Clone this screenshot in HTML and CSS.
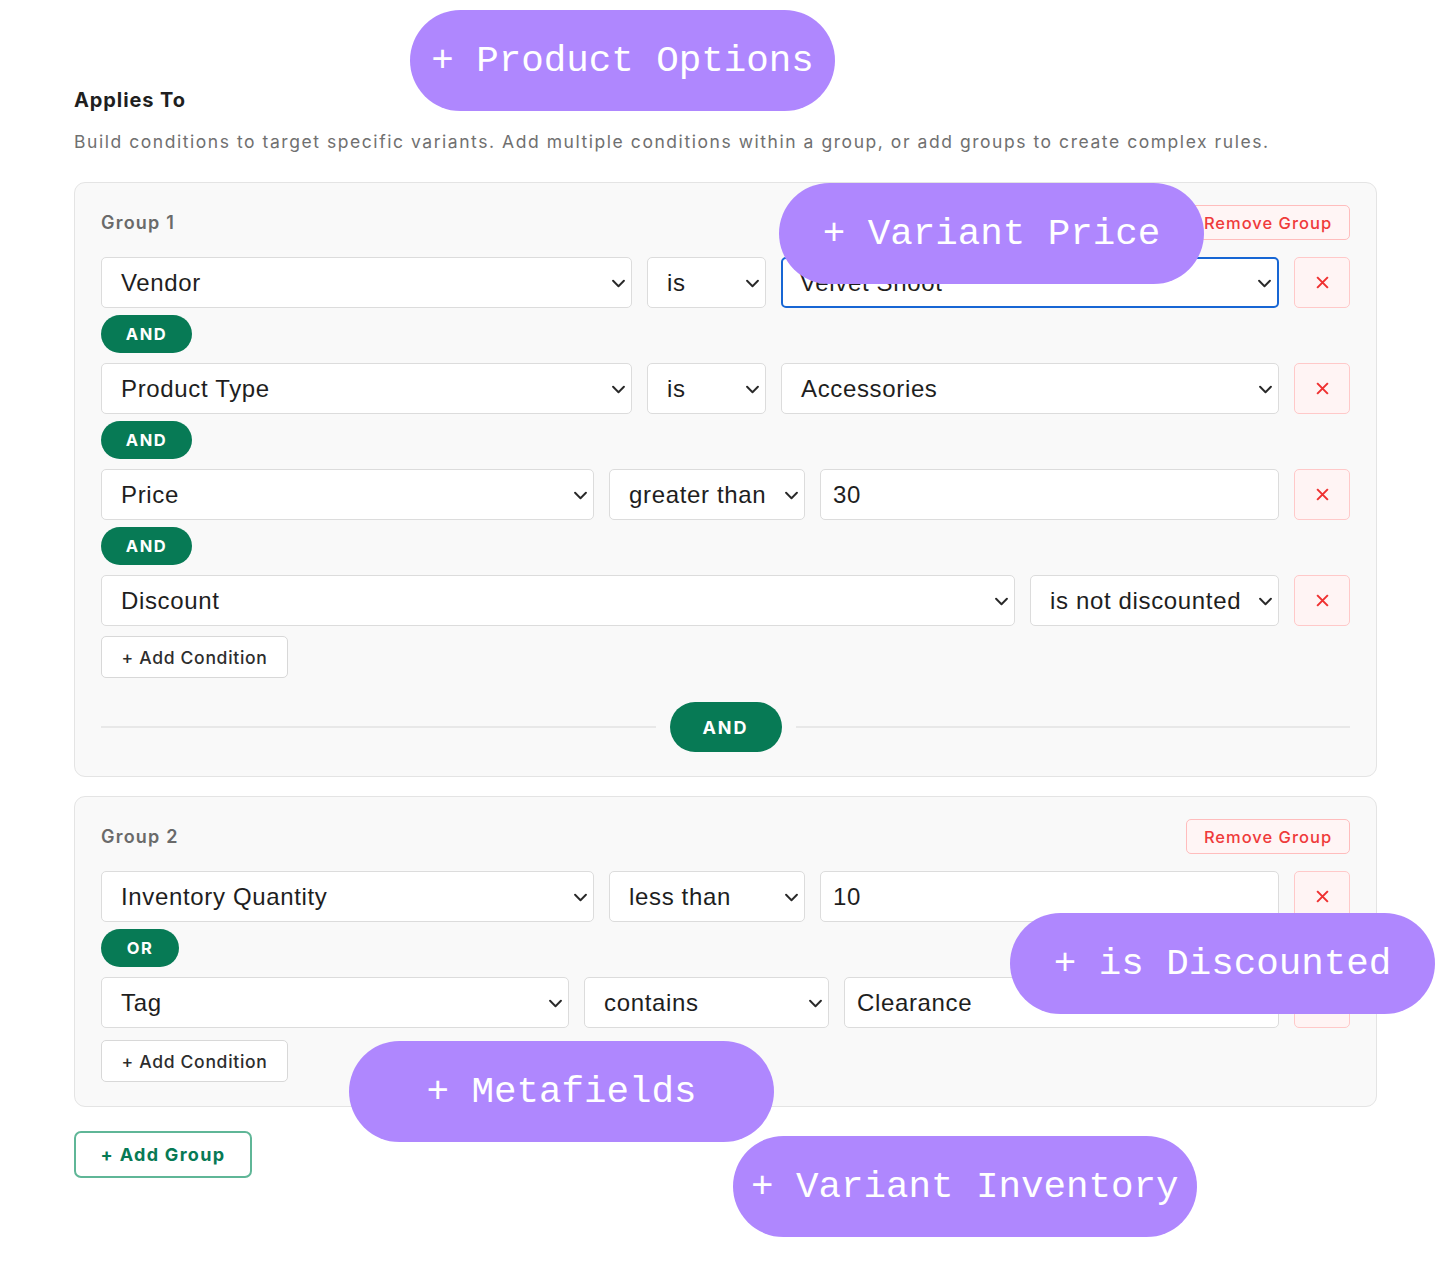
FILE: index.html
```html
<!DOCTYPE html>
<html lang="en">
<head>
<meta charset="utf-8">
<title>Applies To</title>
<link rel="stylesheet" href="styles.css">
</head>
<body>
<div class="page">
  <h2 class="title">Applies To</h2>
  <p class="desc">Build conditions to target specific variants. Add multiple conditions within a group, or add groups to create complex rules.</p>

  <div class="group g1">
    <div class="group-head">
      <span class="group-label">Group 1</span>
      <button class="remove-group">Remove Group</button>
    </div>

    <div class="row">
      <div class="sel w-vendor">Vendor<svg class="chev" viewBox="0 0 12 8"><path d="M1 1.5l5 5 5-5"/></svg></div>
      <div class="sel w-is">is<svg class="chev" viewBox="0 0 12 8"><path d="M1 1.5l5 5 5-5"/></svg></div>
      <div class="sel grow focus">Velvet Shoot<svg class="chev" viewBox="0 0 12 8"><path d="M1 1.5l5 5 5-5"/></svg></div>
      <button class="del"><svg viewBox="0 0 14 14"><path d="M2 2l10 10M12 2L2 12"/></svg></button>
    </div>
    <div class="conn"><span class="logic w-and">AND</span></div>

    <div class="row">
      <div class="sel w-vendor">Product Type<svg class="chev" viewBox="0 0 12 8"><path d="M1 1.5l5 5 5-5"/></svg></div>
      <div class="sel w-is">is<svg class="chev" viewBox="0 0 12 8"><path d="M1 1.5l5 5 5-5"/></svg></div>
      <div class="sel grow">Accessories<svg class="chev" viewBox="0 0 12 8"><path d="M1 1.5l5 5 5-5"/></svg></div>
      <button class="del"><svg viewBox="0 0 14 14"><path d="M2 2l10 10M12 2L2 12"/></svg></button>
    </div>
    <div class="conn"><span class="logic w-and">AND</span></div>

    <div class="row">
      <div class="sel w-price">Price<svg class="chev" viewBox="0 0 12 8"><path d="M1 1.5l5 5 5-5"/></svg></div>
      <div class="sel w-op">greater than<svg class="chev" viewBox="0 0 12 8"><path d="M1 1.5l5 5 5-5"/></svg></div>
      <div class="inp grow">30</div>
      <button class="del"><svg viewBox="0 0 14 14"><path d="M2 2l10 10M12 2L2 12"/></svg></button>
    </div>
    <div class="conn"><span class="logic w-and">AND</span></div>

    <div class="row">
      <div class="sel grow">Discount<svg class="chev" viewBox="0 0 12 8"><path d="M1 1.5l5 5 5-5"/></svg></div>
      <div class="sel w-disc">is not discounted<svg class="chev" viewBox="0 0 12 8"><path d="M1 1.5l5 5 5-5"/></svg></div>
      <button class="del"><svg viewBox="0 0 14 14"><path d="M2 2l10 10M12 2L2 12"/></svg></button>
    </div>

    <button class="add-cond">+ Add Condition</button>

    <div class="join">
      <span class="line"></span>
      <span class="join-pill">AND</span>
      <span class="line"></span>
    </div>
  </div>

  <div class="group g2">
    <div class="group-head">
      <span class="group-label">Group 2</span>
      <button class="remove-group">Remove Group</button>
    </div>

    <div class="row">
      <div class="sel w-price">Inventory Quantity<svg class="chev" viewBox="0 0 12 8"><path d="M1 1.5l5 5 5-5"/></svg></div>
      <div class="sel w-op">less than<svg class="chev" viewBox="0 0 12 8"><path d="M1 1.5l5 5 5-5"/></svg></div>
      <div class="inp grow">10</div>
      <button class="del"><svg viewBox="0 0 14 14"><path d="M2 2l10 10M12 2L2 12"/></svg></button>
    </div>
    <div class="conn"><span class="logic w-or">OR</span></div>

    <div class="row">
      <div class="sel w-tag">Tag<svg class="chev" viewBox="0 0 12 8"><path d="M1 1.5l5 5 5-5"/></svg></div>
      <div class="sel w-contains">contains<svg class="chev" viewBox="0 0 12 8"><path d="M1 1.5l5 5 5-5"/></svg></div>
      <div class="inp grow">Clearance</div>
      <button class="del"><svg viewBox="0 0 14 14"><path d="M2 2l10 10M12 2L2 12"/></svg></button>
    </div>

    <button class="add-cond">+ Add Condition</button>
  </div>

  <button class="add-group">+ Add Group</button>

  <span class="tag t-options">+ Product Options</span>
  <span class="tag t-price">+ Variant Price</span>
  <span class="tag t-disc">+ is Discounted</span>
  <span class="tag t-meta">+ Metafields</span>
  <span class="tag t-inv">+ Variant Inventory</span>
</div>
</body>
</html>
```

FILE: styles.css
```css
* { box-sizing: border-box; }

html, body {
  margin: 0;
  padding: 0;
  background: #ffffff;
}

body {
  font-family: Inter, "Liberation Sans", Arial, sans-serif;
  color: #222;
}

.page {
  position: relative;
  width: 1450px;
  height: 1262px;
  padding: 88px 73px 0 74px;
}

.title {
  margin: 0;
  font-size: 20px;
  line-height: 24px;
  font-weight: 700;
  color: #1f1f1f;
  letter-spacing: 0.9px;
}

.desc {
  margin: 20px 0 0;
  font-size: 17.5px;
  line-height: 20px;
  color: #707070;
  letter-spacing: 1.55px;
  white-space: nowrap;
}

.group {
  margin-top: 30px;
  background: #f9f9f9;
  border: 1.5px solid #e4e4e4;
  border-radius: 11px;
  padding: 22px 26px 24px;
}

.g2 { margin-top: 19px; }

.group-head {
  display: flex;
  align-items: center;
  justify-content: space-between;
  height: 35px;
  margin-bottom: 17px;
}

.group-label {
  font-size: 18px;
  font-weight: 600;
  color: #6a6a6a;
  letter-spacing: 1.2px;
}

.remove-group {
  width: 164px;
  height: 35px;
  border: 1.5px solid #ffbdbd;
  background: #fff5f5;
  border-radius: 5px;
  color: #ef3b3b;
  font-family: Inter, "Liberation Sans", Arial, sans-serif;
  font-size: 16.5px;
  font-weight: 500;
  letter-spacing: 1px;
  padding: 0;
}

.row {
  display: flex;
  gap: 15px;
  height: 51px;
}

.sel, .inp {
  position: relative;
  display: flex;
  align-items: center;
  height: 51px;
  background: #fff;
  border: 1.5px solid #dcdcdc;
  border-radius: 5px;
  font-family: "Liberation Sans", Arial, sans-serif;
  font-size: 24px;
  letter-spacing: 0.65px;
  color: #1e1e1e;
  padding-left: 19px;
  white-space: nowrap;
  overflow: hidden;
}

.inp { padding-left: 12px; }

.sel.focus {
  border: 2.5px solid #1766d4;
  padding-left: 17px;
}

.grow { flex: 1 1 0; min-width: 0; }

.w-vendor { width: 531px; flex: none; }
.w-is { width: 119px; flex: none; }
.w-price { width: 493px; flex: none; }
.w-op { width: 196px; flex: none; }
.w-disc { width: 249px; flex: none; }
.w-tag { width: 468px; flex: none; }
.w-contains { width: 245px; flex: none; }

.chev {
  position: absolute;
  right: 6px;
  top: 50%;
  width: 13px;
  height: 9px;
  margin-top: -4px;
  fill: none;
  stroke: #2a2a2a;
  stroke-width: 1.8;
  stroke-linecap: round;
  stroke-linejoin: round;
}

.del {
  flex: none;
  width: 56px;
  height: 51px;
  background: #fff4f4;
  border: 1.5px solid #ffc9c9;
  border-radius: 5px;
  display: flex;
  align-items: center;
  justify-content: center;
  padding: 0;
}

.del svg {
  width: 15px;
  height: 15px;
  fill: none;
  stroke: #ef3030;
  stroke-width: 1.9;
}

.conn {
  display: flex;
  padding: 7px 0 10px;
}

.logic {
  display: flex;
  align-items: center;
  justify-content: center;
  height: 38px;
  border-radius: 19px;
  background: #077a55;
  color: #fff;
  font-size: 16.5px;
  font-weight: 700;
  letter-spacing: 1.5px;
}

.w-and { width: 91px; }
.w-or { width: 78px; }

.add-cond {
  display: block;
  margin-top: 10px;
  width: 187px;
  height: 42px;
  background: #fff;
  border: 1.5px solid #d8d8d8;
  border-radius: 5px;
  font-family: Inter, "Liberation Sans", Arial, sans-serif;
  font-size: 17.5px;
  font-weight: 500;
  letter-spacing: 0.7px;
  color: #2d2d2d;
  padding: 0;
}

.g2 .add-cond { margin-top: 12px; }

.join {
  display: flex;
  align-items: center;
  gap: 14px;
  margin-top: 24px;
}

.line {
  flex: 1;
  height: 2px;
  background: #e8e8e8;
}

.join-pill {
  display: flex;
  align-items: center;
  justify-content: center;
  width: 112px;
  height: 50px;
  border-radius: 25px;
  background: #077a55;
  color: #fff;
  font-size: 18px;
  font-weight: 700;
  letter-spacing: 2px;
}

.add-group {
  display: block;
  margin-top: 24px;
  width: 178px;
  height: 47px;
  background: #fff;
  border: 2px solid #5fb697;
  border-radius: 7px;
  color: #077a55;
  font-family: Inter, "Liberation Sans", Arial, sans-serif;
  font-size: 18px;
  font-weight: 700;
  letter-spacing: 1.3px;
  padding: 0;
}

.tag {
  position: absolute;
  display: flex;
  align-items: center;
  justify-content: center;
  height: 101px;
  min-width: 425px;
  padding: 0 18px;
  border-radius: 51px;
  background: #af87fe;
  color: #fff;
  font-family: "Liberation Mono", "DejaVu Sans Mono", monospace;
  font-size: 37.5px;
  white-space: nowrap;
}

.t-options { left: 410px; top: 10px; }
.t-price { left: 779px; top: 183px; }
.t-disc { left: 1010px; top: 913px; }
.t-meta { left: 349px; top: 1041px; }
.t-inv { left: 733px; top: 1136px; }
```
